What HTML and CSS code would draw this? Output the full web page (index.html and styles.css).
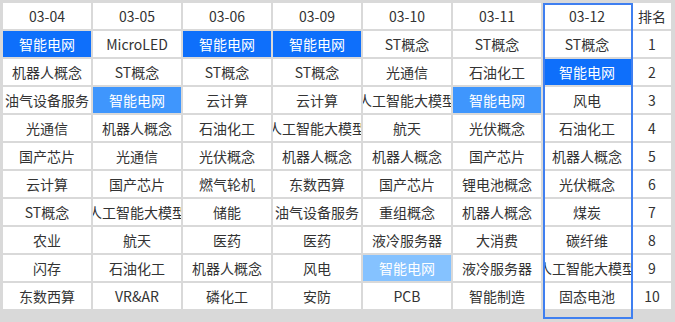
FILE: index.html
```html
<!DOCTYPE html>
<html lang="zh">
<head>
<meta charset="utf-8">
<title>板块排名</title>
<link rel="stylesheet" href="styles.css">
</head>
<body>
<div class="wrap">
  <div class="grid">
    <div class="cell">03-04</div><div class="cell">03-05</div><div class="cell">03-06</div><div class="cell">03-09</div><div class="cell">03-10</div><div class="cell">03-11</div><div class="cell">03-12</div><div class="cell">排名</div>

    <div class="cell hi-1">智能电网</div><div class="cell">MicroLED</div><div class="cell hi-1">智能电网</div><div class="cell hi-1">智能电网</div><div class="cell">ST概念</div><div class="cell">ST概念</div><div class="cell">ST概念</div><div class="cell">1</div>

    <div class="cell">机器人概念</div><div class="cell">ST概念</div><div class="cell">ST概念</div><div class="cell">ST概念</div><div class="cell">光通信</div><div class="cell">石油化工</div><div class="cell hi-1">智能电网</div><div class="cell">2</div>

    <div class="cell">油气设备服务</div><div class="cell hi-2">智能电网</div><div class="cell">云计算</div><div class="cell">云计算</div><div class="cell">人工智能大模型</div><div class="cell hi-2">智能电网</div><div class="cell">风电</div><div class="cell">3</div>

    <div class="cell">光通信</div><div class="cell">机器人概念</div><div class="cell">石油化工</div><div class="cell">人工智能大模型</div><div class="cell">航天</div><div class="cell">光伏概念</div><div class="cell">石油化工</div><div class="cell">4</div>

    <div class="cell">国产芯片</div><div class="cell">光通信</div><div class="cell">光伏概念</div><div class="cell">机器人概念</div><div class="cell">机器人概念</div><div class="cell">国产芯片</div><div class="cell">机器人概念</div><div class="cell">5</div>

    <div class="cell">云计算</div><div class="cell">国产芯片</div><div class="cell">燃气轮机</div><div class="cell">东数西算</div><div class="cell">国产芯片</div><div class="cell">锂电池概念</div><div class="cell">光伏概念</div><div class="cell">6</div>

    <div class="cell">ST概念</div><div class="cell">人工智能大模型</div><div class="cell">储能</div><div class="cell">油气设备服务</div><div class="cell">重组概念</div><div class="cell">机器人概念</div><div class="cell">煤炭</div><div class="cell">7</div>

    <div class="cell">农业</div><div class="cell">航天</div><div class="cell">医药</div><div class="cell">医药</div><div class="cell">液冷服务器</div><div class="cell">大消费</div><div class="cell">碳纤维</div><div class="cell">8</div>

    <div class="cell">闪存</div><div class="cell">石油化工</div><div class="cell">机器人概念</div><div class="cell">风电</div><div class="cell hi-3">智能电网</div><div class="cell">液冷服务器</div><div class="cell">人工智能大模型</div><div class="cell">9</div>

    <div class="cell">东数西算</div><div class="cell">VR&amp;AR</div><div class="cell">磷化工</div><div class="cell">安防</div><div class="cell">PCB</div><div class="cell">智能制造</div><div class="cell">固态电池</div><div class="cell">10</div>
  </div>
  <div class="focus"></div>
</div>
</body>
</html>
```
FILE: styles.css
```css
html, body {
  margin: 0;
  padding: 0;
  background: #d9d9d9;
}

.wrap {
  position: relative;
  width: 675px;
  height: 322px;
  background: #d9d9d9;
  box-sizing: border-box;
  padding: 3px 4px 0 3px;
}

.grid {
  display: grid;
  grid-template-columns: repeat(7, 88px) 38px;
  grid-auto-rows: 26px;
  gap: 2px;
}

.cell {
  background: #ffffff;
  color: #333333;
  font-family: "Noto Sans CJK SC", "Noto Sans", sans-serif;
  font-size: 14px;
  display: flex;
  align-items: center;
  justify-content: center;
  white-space: nowrap;
  overflow: hidden;
  line-height: 1;
}

.hi-1 {
  background: #0e6ffb;
  color: #ffffff;
}

.hi-2 {
  background: #3f96fd;
  color: #ffffff;
}

.hi-3 {
  background: #85c2ff;
  color: #ffffff;
}

.focus {
  position: absolute;
  left: 543px;
  top: 3px;
  width: 90px;
  height: 316px;
  box-sizing: border-box;
  border: 2px solid #3f7ff0;
  pointer-events: none;
}
```
